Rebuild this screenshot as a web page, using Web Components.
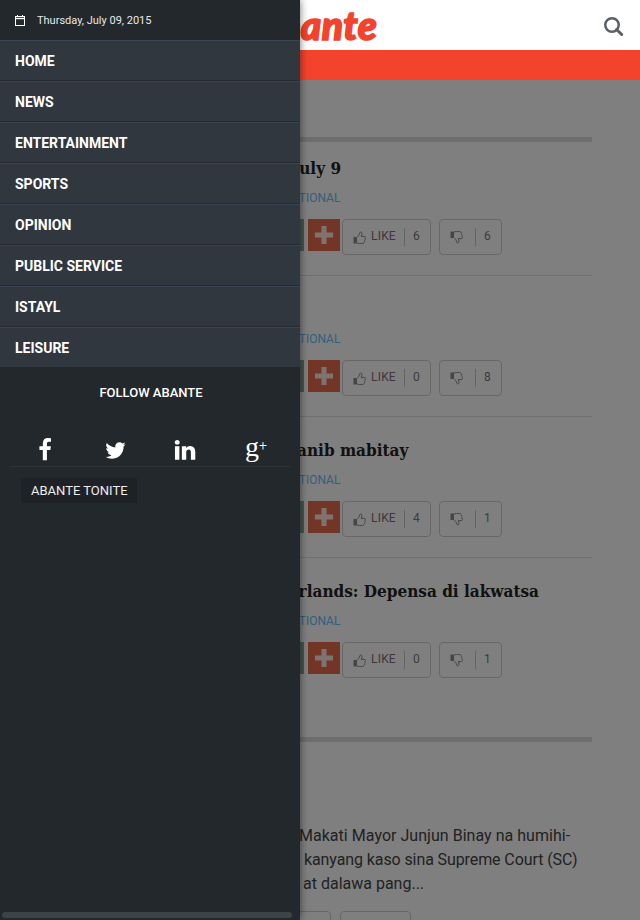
<!DOCTYPE html>
<html>
<head>
<meta charset="utf-8">
<title>Abante</title>
<style>
  html, body { margin: 0; height: 920px; overflow: hidden; background: #fff; }
  body { font-family: Roboto, "Liberation Sans", sans-serif; }
</style>
</head>
<body>
<ab-page>
  <ab-header slot="top"></ab-header>
  <ab-bar slot="content" style="margin-top:57px"></ab-bar>
  <ab-article slot="content" first title-text="July 9" title-indent="244" likes="6" dislikes="6"></ab-article>
  <ab-article slot="content" likes="0" dislikes="8"></ab-article>
  <ab-article slot="content" title-text="Sanib mabitay" title-indent="238" likes="4" dislikes="1"></ab-article>
  <ab-article slot="content" last title-text="Netherlands: Depensa di lakwatsa" title-indent="199" likes="0" dislikes="1"></ab-article>
  <ab-bar slot="content" style="margin-top:38px"></ab-bar>
  <ab-excerpt slot="content"></ab-excerpt>
  <ab-drawer slot="drawer">
    <ab-nav-item>Home</ab-nav-item>
    <ab-nav-item>News</ab-nav-item>
    <ab-nav-item>Entertainment</ab-nav-item>
    <ab-nav-item>Sports</ab-nav-item>
    <ab-nav-item>Opinion</ab-nav-item>
    <ab-nav-item>Public Service</ab-nav-item>
    <ab-nav-item>Istayl</ab-nav-item>
    <ab-nav-item>Leisure</ab-nav-item>
  </ab-drawer>
</ab-page>

<script>
// Page shell: header on top, dimmed content below, drawer over both
class AbPage extends HTMLElement {
    static get style() {
        return `
        <style>
          :host { display: block; position: relative; width: 640px; height: 920px; overflow: hidden; }
          main { position: relative; padding: 0 48px; height: 840px; background: #fff; overflow: hidden; box-sizing: border-box; }
          .dim { position: absolute; left: 0; top: 80px; right: 0; bottom: 0; background: rgba(0,0,0,0.5); }
        </style>
        `;
    }

    constructor() {
        super();
        var shadow = this.attachShadow({mode: 'open'});
        shadow.innerHTML = AbPage.style + `
          <slot name="top"></slot>
          <main><slot name="content"></slot></main>
          <div class="dim"></div>
          <slot name="drawer"></slot>`;
    }
}

class AbHeader extends HTMLElement {
    static get style() {
        return `
        <style>
          :host { display: block; }
          .top { height: 50px; background: #fff; display: flex; align-items: center; justify-content: space-between; padding: 0 16px 0 253px; }
          .logo { font: italic 900 39px/48px Lato, sans-serif; color: #f4432d; -webkit-text-stroke: 1.6px #f4432d; letter-spacing: 0.5px; }
          svg { display: block; margin-top: 4px; }
          .red { height: 30px; background: #f4432d; }
        </style>
        `;
    }

    constructor() {
        super();
        var shadow = this.attachShadow({mode: 'open'});
        shadow.innerHTML = AbHeader.style + `
          <div class="top">
            <div class="logo">Abante</div>
            <svg width="20" height="20" viewBox="0 0 20 20" fill="none" stroke="#5a6068">
              <circle cx="8" cy="8" r="6.75" stroke-width="2.5"/>
              <path d="M12.5 12.5l5.2 5" stroke-width="3" stroke-linecap="round"/>
            </svg>
          </div>
          <div class="red"></div>`;
    }
}

class AbBar extends HTMLElement {
    constructor() {
        super();
        var shadow = this.attachShadow({mode: 'open'});
        shadow.innerHTML = `
        <style>
          :host { display: block; height: 5px; background: #dcdcdc; }
        </style>`;
    }
}

// One story row: title, tag, share squares and the two vote boxes
class AbArticle extends HTMLElement {
    static get style() {
        return `
        <style>
          :host { display: block; padding-top: 20px; height: 141px; box-sizing: border-box; border-bottom: 1px solid #dedede; }
          :host([first]) { padding-top: 13px; height: 134px; }
          :host([last]) { border-bottom: 0; }
          h2 { margin: 0; height: 26px; font: bold 17px/26px "DejaVu Serif", serif; font-stretch: condensed; color: #222; white-space: nowrap; }
          .tag { margin: 8px 0 0 235px; height: 18px; font: 12px/18px Roboto, sans-serif; color: #68c0fa; }
          .tools { display: flex; align-items: flex-start; margin: 12px 0 0 224px; }
          .sq { width: 32px; height: 32px; flex: none; }
          .green { background: #8ca89c; margin-right: 4px; }
          .plus { background: #e46a4c; margin-right: 2px; display: flex; align-items: center; justify-content: center; }
        </style>
        `;
    }

    constructor() {
        super();
        var shadow = this.attachShadow({mode: 'open'});
        var title = this.getAttribute('title-text') || '';
        var indent = this.getAttribute('title-indent') || 0;
        shadow.innerHTML = AbArticle.style + `
          <h2 style="padding-left:${indent}px">${title}</h2>
          <div class="tag">NATIONAL</div>
          <div class="tools">
            <div class="sq green"></div>
            <div class="sq plus">
              <svg width="18" height="18" viewBox="0 0 18 18"><path d="M6.5 0h5v6.5H18v5h-6.5V18h-5v-6.5H0v-5h6.5z" fill="#ffffff" fill-opacity="0.85"/></svg>
            </div>
            <ab-vote kind="like" count="${this.getAttribute('likes')}"></ab-vote>
            <ab-vote kind="dislike" count="${this.getAttribute('dislikes')}"></ab-vote>
          </div>`;
    }
}

class AbVote extends HTMLElement {
    static get style() {
        return `
        <style>
          :host { display: flex; align-items: center; box-sizing: border-box; height: 36px; border: 1px solid #cfcfcf; border-radius: 4px; padding: 0 0 3px 10px; font: 12px/16px Roboto, sans-serif; color: #777; flex: none; }
          :host([kind="like"]) { width: 89px; margin-right: 8px; }
          :host([kind="dislike"]) { width: 63px; }
          svg { display: block; flex: none; margin-top: 3px; }
          .label { color: #8a687c; margin-left: 5px; letter-spacing: 0.2px; width: 26px; }
          i { display: block; width: 1px; height: 18px; background: #c8c8c8; margin: 3px 8px 0 7px; flex: none; }
          :host([kind="dislike"]) i { margin-left: 12px; }
        </style>
        `;
    }

    constructor() {
        super();
        var shadow = this.attachShadow({mode: 'open'});
        var like = this.getAttribute('kind') == 'like';
        var thumb = `
          <svg width="13" height="13" viewBox="0 0 13 13" ${like ? '' : 'style="transform:scaleY(-1)"'}>
            <rect x="0.5" y="6" width="3" height="6.5" fill="#8a8a8a" />
            <path d="M3.5 6.5C5 5.5 6.3 4 6.8 1.8 7 .8 8.8.6 9 2.4c.1 1-.4 2.2-.8 3h3c1.5 0 1.6 1.7.7 2.2.6.7.3 1.7-.3 2 .2.8-.1 1.6-.7 1.8 0 .9-.6 1.2-1.5 1.2H6.5c-1 0-2-.6-3-.8z" fill="none" stroke="#8a8a8a" stroke-width="1"/>
          </svg>`;
        shadow.innerHTML = AbVote.style + thumb +
            (like ? '<span class="label">LIKE</span>' : '') +
            `<i></i><span>${this.getAttribute('count')}</span>`;
    }
}

class AbExcerpt extends HTMLElement {
    static get style() {
        return `
        <style>
          :host { display: block; padding-top: 82px; font: 16px/24px Roboto, sans-serif; color: #444; white-space: nowrap; }
          p { margin: 0; }
          .a { padding-left: 251px; letter-spacing: 0.03px; }
          .b { padding-left: 256px; letter-spacing: -0.1px; }
          .c { padding-left: 255px; }
          .boxes { display: flex; gap: 9px; margin: 15px 0 0 225px; }
          .boxes div { height: 30px; border: 1px solid #cfcfcf; border-radius: 4px; box-sizing: border-box; }
        </style>
        `;
    }

    constructor() {
        super();
        var shadow = this.attachShadow({mode: 'open'});
        shadow.innerHTML = AbExcerpt.style + `
          <p class="a">Makati Mayor Junjun Binay na humihi-</p>
          <p class="b">kanyang kaso sina Supreme Court (SC)</p>
          <p class="c">at dalawa pang...</p>
          <div class="boxes"><div style="width:58px"></div><div style="width:71px"></div></div>`;
    }
}

// Side menu, sits over the page
class AbDrawer extends HTMLElement {
    static get style() {
        return `
        <style>
          :host { display: block; position: absolute; left: 0; top: 0; width: 300px; height: 920px; background: #23282d; box-shadow: 0 0 8px rgba(0,0,0,0.55); color: #fff; font-family: Roboto, sans-serif; overflow: hidden; }
          .date { display: flex; align-items: center; height: 40px; padding-left: 15px; font-size: 11px; color: #e8e8e8; }
          .date svg { margin-right: 12px; display: block; }
          .follow { margin: 0; padding: 18px 0 0 2px; height: 17px; text-align: center; font: 500 13px/16px Roboto, sans-serif; }
          .social { display: grid; grid-template-columns: repeat(4, 70px); align-items: end; margin: 0 10px; padding-bottom: 4px; border-bottom: 1px solid #2f3439; width: 280px; box-sizing: border-box; height: 65px; }
          .social span { display: flex; justify-content: center; height: 24px; align-items: center; }
          .social svg { display: block; fill: #fff; }
          .gplus { font: 28px/24px "Liberation Serif", serif; position: relative; top: -3px; left: 1px; }
          .gplus small { font: 300 14px/12px Roboto, sans-serif; position: relative; top: -2px; }
          .tag { display: inline-block; margin: 11px 0 0 21px; padding: 0 9px 0 10px; height: 25px; line-height: 25px; background: #1e2226; font-size: 13px; color: #eee; }
          .thumb { position: absolute; left: 2px; bottom: 2px; width: 290px; height: 6px; border-radius: 3px; background: #3e4347; }
        </style>
        `;
    }

    constructor() {
        super();
        var shadow = this.attachShadow({mode: 'open'});
        shadow.innerHTML = AbDrawer.style + `
          <div class="date">
            <svg width="10" height="11" viewBox="0 0 10 11" fill="none" stroke="#fff">
              <rect x="0.5" y="1.5" width="9" height="9"/>
              <path d="M0.5 3.5h9" stroke-width="1.4"/>
              <path d="M2.5 0v2M7.5 0v2"/>
            </svg>
            Thursday, July 09, 2015
          </div>
          <slot></slot>
          <p class="follow">FOLLOW ABANTE</p>
          <div class="social">
            <span><svg width="24" height="24" viewBox="0 0 1792 1792"><path d="M1343 12v264h-157q-86 0-116 36t-30 108v189h293l-39 296h-254v759h-306v-759h-255v-296h255v-218q0-186 104-288.5t277-102.5q147 0 228 12z"/></svg></span>
            <span><svg width="23" height="23" viewBox="0 0 1792 1792"><path d="M1684 408q-67 98-162 167 1 14 1 42 0 130-38 259.5t-115.5 248.5-184.5 210.5-258 146-323 54.5q-271 0-496-145 35 4 78 4 225 0 401-138-105-2-188-64.5t-114-159.5q33 5 61 5 43 0 85-11-112-23-185.5-111.5t-73.5-205.5v-4q68 38 146 41-66-44-105-115t-39-154q0-88 44-163 121 149 294.5 238.5t371.5 99.5q-8-38-8-74 0-134 94.5-228.5t228.5-94.5q140 0 236 102 109-21 205-78-37 115-142 178 92-10 184-50z"/></svg></span>
            <span><svg width="24" height="24" viewBox="0 0 1792 1792"><path d="M477 625v991h-330v-991h330zm21-306q1 73-50.5 122t-135.5 49h-2q-82 0-132-49t-50-122q0-74 51.5-122.5t134.5-48.5 133 48.5 51 122.5zm1166 729v568h-329v-530q0-105-40.5-164.5t-126.5-59.5q-63 0-105.5 34.5t-63.5 85.5q-11 30-11 81v553h-329q2-399 2-647t-1-296l-1-48h329v144h-2q20-32 41-56t56.5-52 87-43.5 114.5-15.5q171 0 275 113.5t104 332.5z"/></svg></span>
            <span class="gplus">g<small>+</small></span>
          </div>
          <div class="tag">ABANTE TONITE</div>
          <div class="thumb"></div>`;
    }
}

class AbNavItem extends HTMLElement {
    static get style() {
        return `
        <style>
          :host { display: block; box-sizing: border-box; height: 41px; padding-left: 15px; background: #30373f; border-top: 1px solid #3b4452; border-bottom: 1px solid #252a30; font: 700 14px/41px Roboto, sans-serif; color: #fff; text-transform: uppercase; }
          :host(:last-of-type) { border-bottom: 0; height: 40px; }
        </style>
        `;
    }

    constructor() {
        super();
        var shadow = this.attachShadow({mode: 'open'});
        shadow.innerHTML = AbNavItem.style + '<slot></slot>';
    }
}

customElements.define('ab-page', AbPage);
customElements.define('ab-header', AbHeader);
customElements.define('ab-bar', AbBar);
customElements.define('ab-vote', AbVote);
customElements.define('ab-article', AbArticle);
customElements.define('ab-excerpt', AbExcerpt);
customElements.define('ab-drawer', AbDrawer);
customElements.define('ab-nav-item', AbNavItem);
</script>
</body>
</html>
